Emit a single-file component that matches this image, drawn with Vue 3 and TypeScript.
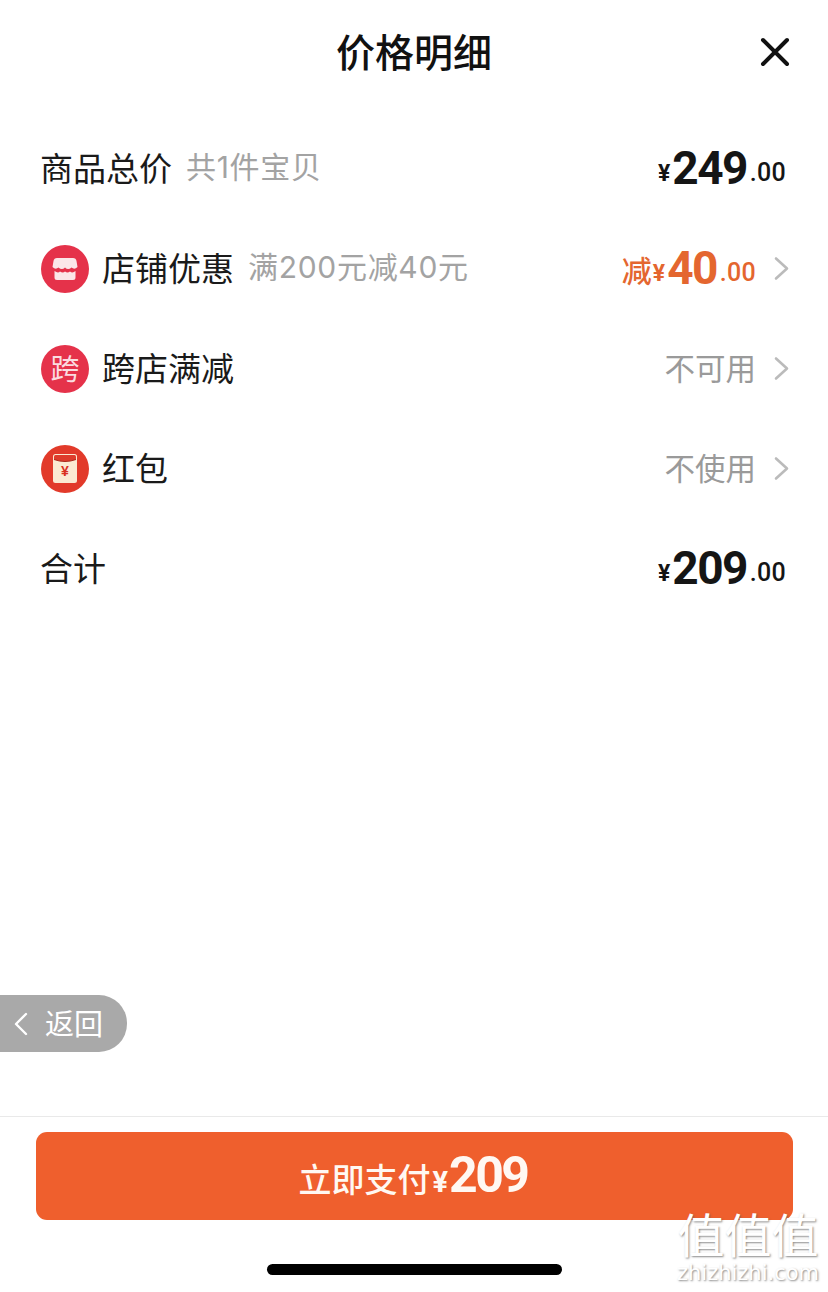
<script setup lang="ts">
interface Row {
  label: string
  note?: string
  icon?: 'store' | 'cross' | 'packet'
  status?: string
  amount?: { prefix?: string; whole: string; tone?: string }
  chevron: boolean
}
const rows: Row[] = [
  { label: '商品总价', note: '共1件宝贝', amount: { whole: '249' }, chevron: false },
  { label: '店铺优惠', note: '满200元减40元', icon: 'store', amount: { prefix: '减', whole: '40', tone: 'orange' }, chevron: true },
  { label: '跨店满减', icon: 'cross', status: '不可用', chevron: true },
  { label: '红包', icon: 'packet', status: '不使用', chevron: true },
  { label: '合计', amount: { whole: '209' }, chevron: false }
]
</script>

<template>
  <div class="page">
    <header class="head">
      <h1 class="title">价格明细</h1>
      <svg class="close" width="30" height="30" viewBox="0 0 30 30" aria-label="关闭">
        <path d="M3 3 L27 27 M27 3 L3 27" stroke="#111" stroke-width="4" stroke-linecap="round" fill="none" />
      </svg>
    </header>

    <main class="list">
      <div v-for="row in rows" :key="row.label" class="row">
        <div class="left">
          <span v-if="row.icon === 'cross'" class="badge cross">跨</span>
          <svg v-else-if="row.icon === 'store'" class="badge" viewBox="0 0 48 48">
            <circle cx="24" cy="24" r="24" fill="#e5324a" />
            <path d="M16 13 H32 Q35 13 35.5 16 L36.5 22 Q33.5 25 30.5 22.5 Q27 25.5 24 22.5 Q21 25.5 17.5 22.5 Q14.5 25 11.5 22 L12.5 16 Q13 13 16 13 Z" fill="#fbe6e8" />
            <path d="M13.5 26 Q17 28.5 19 26.5 Q22 28.5 24 26.5 Q26.5 28.5 29 26.5 Q31.5 28.5 34.5 26 V32.5 Q34.5 35 32 35 H16 Q13.5 35 13.5 32.5 Z" fill="#fbe6e8" />
          </svg>
          <svg v-else-if="row.icon === 'packet'" class="badge" viewBox="0 0 48 48">
            <circle cx="24" cy="24" r="24" fill="#e23a2a" />
            <rect x="12" y="9" width="24" height="29" rx="2.5" fill="#fbead2" />
            <path d="M13 11.5 Q13 10 14.5 10 H33.5 Q35 10 35 11.5 V14.5 Q24 18.5 13 14.5 Z" fill="#de3c2b" />
            <path d="M13 14.5 Q24 18.5 35 14.5" stroke="#a8281c" stroke-width="1" fill="none" />
            <text x="24" y="31" text-anchor="middle" class="packet-yen">¥</text>
          </svg>
          <span class="label">{{ row.label }}</span>
          <span v-if="row.note" class="note">{{ row.note }}</span>
        </div>
        <div class="right" :class="{ plain: !row.chevron }">
          <span v-if="row.status" class="status">{{ row.status }}</span>
          <span v-if="row.amount" class="amount" :class="row.amount.tone">
            <span v-if="row.amount.prefix" class="prefix">{{ row.amount.prefix }}</span><span class="yen">¥</span><span class="whole">{{ row.amount.whole }}</span><span class="cents">.00</span>
          </span>
          <svg v-if="row.chevron" class="chev" width="16" height="26" viewBox="0 0 16 26">
            <path d="M2 2.5 L13 12.5 L2 22.5" stroke="#bbb" stroke-width="2.6" fill="none" stroke-linecap="round" stroke-linejoin="round" />
          </svg>
        </div>
      </div>
    </main>

    <footer class="foot">
      <button class="pay" type="button">
        <span class="pay-text">立即支付</span><span class="pay-yen">¥</span><span class="pay-num">209</span>
      </button>
      <div class="home-wrap"><div class="home"></div></div>
    </footer>

    <div class="back">
      <svg width="16" height="26" viewBox="0 0 16 26">
        <path d="M13 3 L3 13 L13 23" stroke="#fff" stroke-width="2.4" fill="none" stroke-linecap="round" stroke-linejoin="round" />
      </svg>
      <span class="back-text">返回</span>
    </div>

    <div class="mark">
      <div class="mark-cn">值值值</div>
      <div class="mark-en">zhizhizhi.com</div>
    </div>
  </div>
</template>

<style>
html, body { margin: 0; background: #fff; }
</style>

<style scoped>
.page {
  position: relative;
  width: 828px;
  height: 1292px;
  display: flex;
  flex-direction: column;
  overflow: hidden;
  background: #fff;
  color: #111;
  font-family: "Noto Sans CJK SC", "Noto Sans", sans-serif;
}
.head {
  height: 119px;
  flex: none;
  position: relative;
  display: flex;
  justify-content: center;
  padding-top: 23px;
  box-sizing: border-box;
}
.title {
  margin: 0;
  font-size: 39px;
  line-height: 54px;
  font-weight: 500;
}
.close {
  position: absolute;
  left: 760px;
  top: 37px;
}
.list { flex: 1; }
.row {
  height: 100px;
  display: flex;
  align-items: center;
  justify-content: space-between;
  padding: 0 38px 0 40px;
}
.left, .right { display: flex; align-items: center; }
.badge {
  width: 48px;
  height: 48px;
  margin-left: 1px;
  margin-right: 13px;
  flex: none;
}
.cross {
  border-radius: 50%;
  background: #e5324a;
  color: #fbdbe0;
  font-size: 29px;
  line-height: 45px;
  text-align: center;
}
.packet-yen {
  font-family: "Liberation Sans", sans-serif;
  font-size: 14px;
  font-weight: 700;
  fill: #d9301f;
}
.label {
  font-size: 33px;
  line-height: 46px;
  padding-bottom: 4px;
  color: #1a1a1a;
}
.note {
  margin-left: 14px;
  font-family: Inter, "Noto Sans CJK SC", sans-serif;
  font-size: 30px;
  line-height: 46px;
  letter-spacing: 0.7px;
  padding-bottom: 4px;
  color: #a3a3a3;
}
.right.plain { padding-right: 4px; }
.status {
  font-size: 30.5px;
  line-height: 46px;
  padding-bottom: 4px;
  color: #9a9a9a;
}
.chev { margin-left: 18px; }
.amount {
  display: block;
  white-space: nowrap;
  line-height: 60px;
  padding-top: 9px;
  font-family: Roboto, "Liberation Sans", sans-serif;
  color: #151515;
}
.amount.orange { color: #e4662f; }
.prefix {
  font-family: "Noto Sans CJK SC", sans-serif;
  font-size: 30px;
  font-weight: 500;
  vertical-align: 2px;
}
.yen {
  font-size: 23px;
  font-weight: 700;
  margin: 0 2px 0 1px;
  vertical-align: 3px;
}
.whole {
  font-size: 46px;
  font-weight: 700;
  letter-spacing: -1.6px;
}
.cents {
  font-size: 25px;
  font-weight: 500;
  margin-left: 3px;
  letter-spacing: 0.3px;
  vertical-align: 3px;
}
.foot {
  flex: none;
  border-top: 1px solid #e9e9e9;
  height: 176px;
  box-sizing: border-box;
  padding: 15px 35px 0 36px;
}
.pay {
  display: flex;
  align-items: baseline;
  justify-content: center;
  width: 100%;
  height: 88px;
  padding: 14px 3px 0 0;
  border: 0;
  border-radius: 11px;
  background: #ef5f2d;
  color: #fff8f2;
  font-family: Roboto, "Liberation Sans", sans-serif;
  box-sizing: border-box;
}
.pay-text {
  font-family: "Noto Sans CJK SC", sans-serif;
  font-size: 33px;
  font-weight: 500;
}
.pay-yen { font-size: 29px; font-weight: 700; margin: 0 1px 0 2px; }
.pay-num { font-size: 50px; font-weight: 700; letter-spacing: -2.5px; }
.home-wrap {
  display: flex;
  justify-content: center;
  padding-top: 44px;
}
.home {
  width: 295px;
  height: 11px;
  border-radius: 6px;
  background: #000;
}
.back {
  position: absolute;
  left: 0;
  top: 995px;
  width: 127px;
  height: 57px;
  box-sizing: border-box;
  padding-left: 13px;
  display: flex;
  align-items: center;
  gap: 16px;
  border-radius: 0 28px 28px 0;
  background: #a9a9a9;
  color: #fff;
  font-size: 29px;
}
.back-text { padding-bottom: 4px; }
.mark {
  position: absolute;
  left: 675px;
  top: 1207px;
  width: 146px;
  text-align: center;
  color: #fff;
  text-shadow: 1px 1px 2px rgba(90, 90, 90, 0.7);
}
.mark-cn {
  font-size: 47px;
  line-height: 52px;
  white-space: nowrap;
  font-weight: 400;
}
.mark-en {
  font-family: "DejaVu Sans", sans-serif;
  font-size: 21px;
  line-height: 28px;
  white-space: nowrap;
}
</style>
